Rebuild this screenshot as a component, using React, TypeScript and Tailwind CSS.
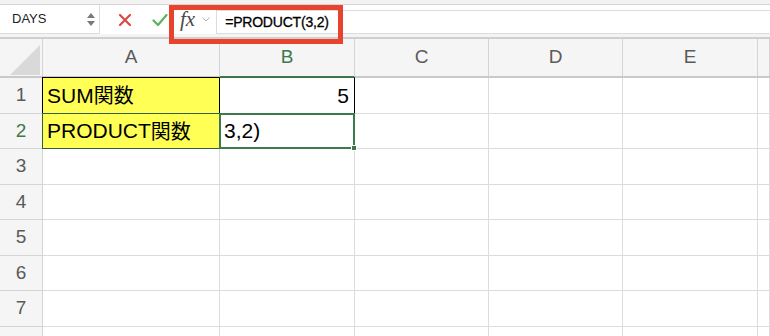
const cols = ["A", "B", "C", "D", "E", ""];
const rows = [1, 2, 3, 4, 5, 6, 7, 8];

const colWidths = ["w-[177px]", "w-[135px]", "w-[134px]", "w-[134px]", "w-[135px]", "flex-1"];

function Label({ latin }: { latin: string }) {
  return (
    <>
      <span className="text-[21px]">{latin}</span>
      <span className="text-[20px]" style={{ fontFamily: '"Noto Sans CJK JP", sans-serif' }}>
        関数
      </span>
    </>
  );
}

function CellContent({ row, col }: { row: number; col: number }) {
  if (row === 1 && col === 0)
    return (
      <div className="absolute inset-[-1px] bg-[#ffff55] border border-black flex items-center pl-[4px] text-black">
        <Label latin="SUM" />
      </div>
    );
  if (row === 2 && col === 0)
    return (
      <div className="absolute inset-[-1px] bg-[#ffff55] border border-[#2f5f3f] flex items-center pl-[4px] text-black">
        <Label latin="PRODUCT" />
      </div>
    );
  if (row === 1 && col === 1)
    return (
      <div className="absolute inset-[-1px] bg-white border border-black border-t-[#3f6f4c] flex items-center justify-end pr-[5px] text-[21px] text-black">
        5
      </div>
    );
  if (row === 2 && col === 1)
    return (
      <div className="absolute inset-[-1px] bg-white border-2 border-[#3c7a4e] flex items-center pl-[3px] text-[21px] text-black z-10">
        3,2)
        <div className="absolute right-[-4px] bottom-[-4px] w-[6px] h-[6px] bg-[#3c7a4e] border border-white" />
      </div>
    );
  return null;
}

export default function App() {
  return (
    <div
      className="w-[770px] h-[336px] overflow-hidden bg-white relative"
      style={{ fontFamily: '"Liberation Sans", "Noto Sans CJK JP", sans-serif' }}
    >
      {/* toolbar remnant */}
      <div className="h-[5px] bg-[#f2f2f2] border-b border-[#d4d4d4]" />

      {/* formula bar */}
      <div className="h-[29px] flex items-stretch bg-white">
        <div className="w-[100px] border-r border-b border-[#dcdcdc] flex items-center justify-between pl-[12px] pr-[4px]">
          <span className="text-[13px] text-[#222]">DAYS</span>
          <div className="flex flex-col gap-[3px]">
            <svg width="8" height="5" viewBox="0 0 8 5">
              <path d="M4 0 L8 5 L0 5 Z" fill="#7a7a7a" />
            </svg>
            <svg width="8" height="5" viewBox="0 0 8 5">
              <path d="M0 0 L8 0 L4 5 Z" fill="#7a7a7a" />
            </svg>
          </div>
        </div>
        <div className="w-[70px] flex items-center gap-[20px] pl-[18px]">
          <svg width="14" height="14" viewBox="0 0 14 14">
            <path d="M2 2 L12 12 M12 2 L2 12" stroke="#dc4a45" strokeWidth="2.2" strokeLinecap="round" />
          </svg>
          <svg width="16" height="14" viewBox="0 0 16 14">
            <path d="M1.5 7.5 L6 12 L14.5 2" stroke="#5ab55a" strokeWidth="2.2" fill="none" strokeLinecap="round" strokeLinejoin="round" />
          </svg>
        </div>
        <div className="flex items-center pl-[10px] gap-[7px]">
          <span
            className="text-[21px] italic text-[#4a4a4a] leading-none"
            style={{ fontFamily: '"Liberation Serif", serif' }}
          >
            fx
          </span>
          <svg width="8" height="5" viewBox="0 0 8 5">
            <path d="M0.5 0.5 L4 4 L7.5 0.5" stroke="#b0b0b0" strokeWidth="1" fill="none" />
          </svg>
        </div>
        <div className="flex-1 ml-[6px] mt-[5px] border-t border-b border-l border-[#dcdcdc] bg-white flex items-center pl-[8px] text-[14px] tracking-[-0.2px] text-black [-webkit-text-stroke:0.3px_black]">
          =PRODUCT(3,2)
        </div>
      </div>

      {/* separator lines */}
      <div className="h-[5px] bg-[#f4f4f4] border-b-2 border-[#cfcfcf]" />

      {/* column headers */}
      <div className="flex h-[39px] bg-[#f5f5f5] border-b-2 border-[#c9c9c9]">
        <div className="w-[43px] border-r border-[#d4d4d4] relative">
          <svg className="absolute left-[10px] top-[6px]" width="30" height="30" viewBox="0 0 30 30">
            <path d="M30 0 L30 30 L0 30 Z" fill="#d9d9d9" />
          </svg>
        </div>
        {cols.map((c, i) => (
          <div
            key={i}
            className={`${colWidths[i]} flex items-center justify-center border-r border-[#d4d4d4] text-[19px] ${
              c === "B" ? "text-[#3c7a4e] border-b-2 border-b-[#3c7a4e] -mb-[2px]" : "text-[#5a5a5a]"
            }`}
          >
            {c}
          </div>
        ))}
      </div>

      {/* rows */}
      {rows.map((r) => (
        <div key={r} className="flex h-[35.5px]">
          <div
            className={`w-[43px] bg-[#f5f5f5] border-r border-b border-[#d4d4d4] flex items-center justify-center text-[19px] ${
              r === 2 ? "text-[#3c7a4e]" : "text-[#5a5a5a]"
            }`}
          >
            {r < 8 ? r : ""}
          </div>
          {cols.map((_, i) => (
            <div key={i} className={`${colWidths[i]} relative border-r border-b border-[#dcdcdc]`}>
              <CellContent row={r} col={i} />
            </div>
          ))}
        </div>
      ))}

      {/* annotation box */}
      <div className="absolute left-[169px] top-[5px] w-[174px] h-[39px] border-[5px] border-[#e8432d] pointer-events-none" />
    </div>
  );
}
